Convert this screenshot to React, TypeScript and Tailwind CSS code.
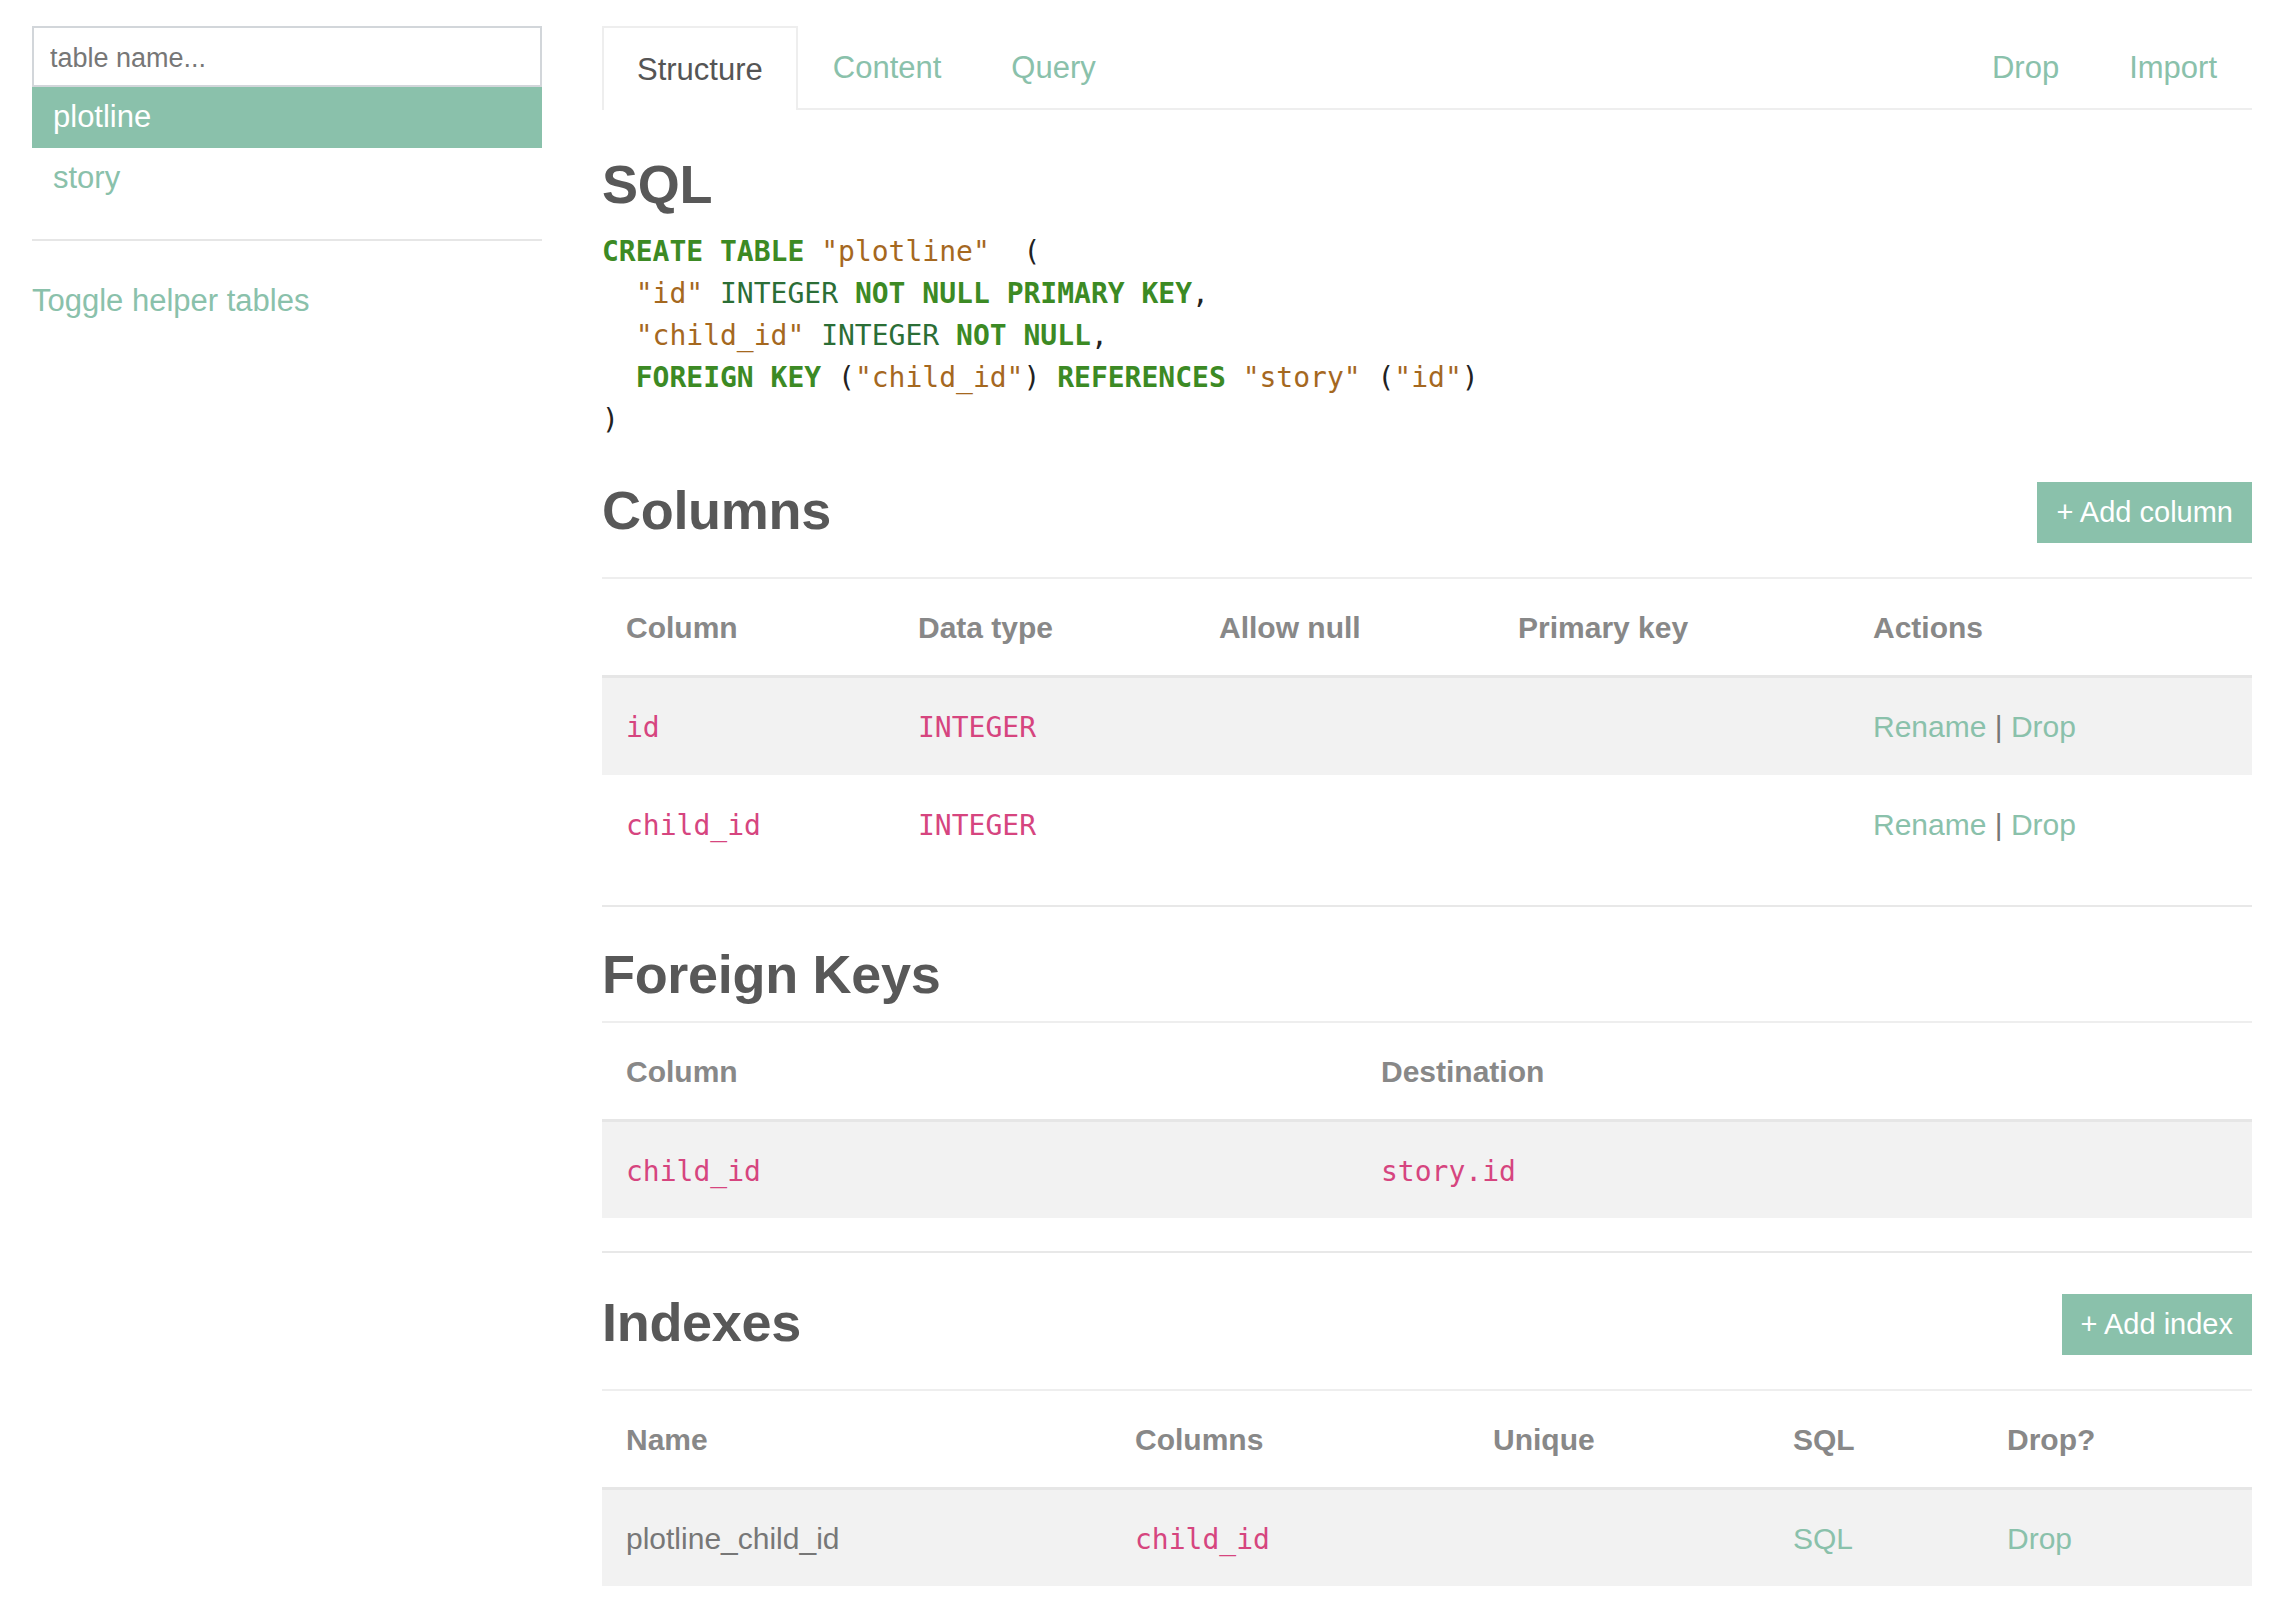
import React from "react";

const green = "text-[#8ac1ab]";

const SqlCode = () => {
  const kw = "font-bold text-[#3c8a24]";
  const ty = "text-[#2b6e36]";
  const st = "text-[#a5681f]";
  return (
    <pre className="mt-[19px] font-['DejaVu_Sans_Mono',monospace] text-[28px] leading-[42px] text-[#222]">
      <span className={kw}>CREATE</span> <span className={kw}>TABLE</span>{" "}
      <span className={st}>"plotline"</span>{"  ("}
      {"\n  "}
      <span className={st}>"id"</span> <span className={ty}>INTEGER</span>{" "}
      <span className={kw}>NOT</span> <span className={kw}>NULL</span>{" "}
      <span className={kw}>PRIMARY</span> <span className={kw}>KEY</span>,
      {"\n  "}
      <span className={st}>"child_id"</span> <span className={ty}>INTEGER</span>{" "}
      <span className={kw}>NOT</span> <span className={kw}>NULL</span>,
      {"\n  "}
      <span className={kw}>FOREIGN</span> <span className={kw}>KEY</span> (
      <span className={st}>"child_id"</span>) <span className={kw}>REFERENCES</span>{" "}
      <span className={st}>"story"</span> (<span className={st}>"id"</span>)
      {"\n)"}
    </pre>
  );
};

const Heading = ({ children, className = "" }: { children: React.ReactNode; className?: string }) => (
  <h2 className={`text-[54px] leading-[56px] font-bold tracking-[-0.3px] text-[#585858] ${className}`}>
    {children}
  </h2>
);

const AddButton = ({ label }: { label: string }) => (
  <button className="h-[61px] px-[19px] bg-[#8ac1ab] text-white text-[29px]">
    {label}
  </button>
);

const Code = ({ children }: { children: React.ReactNode }) => (
  <span className="font-['DejaVu_Sans_Mono',monospace] text-[28px] text-[#d6457f]">
    {children}
  </span>
);

const Sidebar = () => (
  <aside className="w-[510px] ml-[32px] pt-[26px] shrink-0">
    <input
      className="w-full h-[61px] border-2 border-[#d2d6da] px-[16px] pt-[4px] text-[27px] text-[#555] outline-none placeholder:text-[#777]"
      placeholder="table name..."
    />
    <div className="h-[61px] pl-[21px] flex items-center bg-[#8ac1ab] text-white text-[31px]">
      plotline
    </div>
    <div className={`h-[61px] pl-[21px] flex items-center text-[31px] ${green}`}>
      story
    </div>
    <div className="mt-[30px] border-t-2 border-[#e6e6e6]" />
    <div className={`mt-[37px] text-[31px] ${green}`}>Toggle helper tables</div>
  </aside>
);

const Tabs = () => (
  <nav className="flex items-end h-[84px] border-b-2 border-[#eee] text-[31px]">
    <div className="h-[84px] -mb-[2px] px-[33px] pt-[2px] flex items-center border-2 border-b-0 border-[#eee] bg-white text-[#555]">
      Structure
    </div>
    <div className={`h-[82px] px-[35px] pt-[2px] flex items-center ${green}`}>Content</div>
    <div className={`h-[82px] px-[35px] pt-[2px] flex items-center ${green}`}>Query</div>
    <div className="flex-1" />
    <div className={`h-[82px] px-[35px] pt-[2px] flex items-center ${green}`}>Drop</div>
    <div className={`h-[82px] px-[35px] pt-[2px] flex items-center ${green}`}>Import</div>
  </nav>
);

const Grid = ({
  cols,
  className,
  children,
}: {
  cols: string;
  className: string;
  children: React.ReactNode;
}) => <div className={`grid items-center ${cols} ${className}`}>{children}</div>;

const Cell = ({ children }: { children?: React.ReactNode }) => (
  <div className="pl-[24px]">{children}</div>
);

const colsA = "grid-cols-[292px_301px_299px_355px_403px]";
const colsB = "grid-cols-[755px_895px]";
const colsC = "grid-cols-[509px_358px_300px_214px_269px]";

// height includes the 3px bottom border
const headRow = "h-[99px] border-b-[3px] border-[#e6e6e6] font-bold text-[#888]";

const Actions = () => (
  <span>
    <span className={green}>Rename</span>
    <span className="text-[#777]"> | </span>
    <span className={green}>Drop</span>
  </span>
);

export default function App() {
  return (
    <div className="flex min-h-screen bg-white font-['Liberation_Sans',Arial,sans-serif] text-[30px] pb-[60px]">
      <Sidebar />
      <main className="ml-[60px] w-[1650px] pt-[26px]">
        <Tabs />
        <div className="mt-[46px]">
          <Heading>SQL</Heading>
        </div>
        <SqlCode />

        <div className="mt-[41px] h-[61px] flex items-center justify-between">
          <Heading className="pb-[5px]">Columns</Heading>
          <AddButton label="+ Add column" />
        </div>
        <div className="mt-[34px] border-t-2 border-[#eee]">
          <Grid cols={colsA} className={headRow}>
            <Cell>Column</Cell>
            <Cell>Data type</Cell>
            <Cell>Allow null</Cell>
            <Cell>Primary key</Cell>
            <Cell>Actions</Cell>
          </Grid>
          <Grid cols={colsA} className="h-[97px] bg-[#f2f2f2]">
            <Cell><Code>id</Code></Cell>
            <Cell><Code>INTEGER</Code></Cell>
            <Cell />
            <Cell />
            <Cell><Actions /></Cell>
          </Grid>
          <Grid cols={colsA} className="h-[98px]">
            <Cell><Code>child_id</Code></Cell>
            <Cell><Code>INTEGER</Code></Cell>
            <Cell />
            <Cell />
            <Cell><Actions /></Cell>
          </Grid>
        </div>
        <div className="mt-[32px] border-t-2 border-[#e8e8e8]" />

        <div className="mt-[39px]">
          <Heading>Foreign Keys</Heading>
        </div>
        <div className="mt-[19px] border-t-2 border-[#eee]">
          <Grid cols={colsB} className={headRow}>
            <Cell>Column</Cell>
            <Cell>Destination</Cell>
          </Grid>
          <Grid cols={colsB} className="h-[96px] bg-[#f2f2f2]">
            <Cell><Code>child_id</Code></Cell>
            <Cell><Code>story.id</Code></Cell>
          </Grid>
        </div>
        <div className="mt-[33px] border-t-2 border-[#e8e8e8]" />

        <div className="mt-[41px] h-[61px] flex items-center justify-between">
          <Heading className="pb-[5px]">Indexes</Heading>
          <AddButton label="+ Add index" />
        </div>
        <div className="mt-[34px] border-t-2 border-[#eee]">
          <Grid cols={colsC} className={headRow}>
            <Cell>Name</Cell>
            <Cell>Columns</Cell>
            <Cell>Unique</Cell>
            <Cell>SQL</Cell>
            <Cell>Drop?</Cell>
          </Grid>
          <Grid cols={colsC} className="h-[96px] bg-[#f2f2f2]">
            <Cell><span className="text-[#777]">plotline_child_id</span></Cell>
            <Cell><Code>child_id</Code></Cell>
            <Cell />
            <Cell><span className={green}>SQL</span></Cell>
            <Cell><span className={green}>Drop</span></Cell>
          </Grid>
        </div>
      </main>
    </div>
  );
}
